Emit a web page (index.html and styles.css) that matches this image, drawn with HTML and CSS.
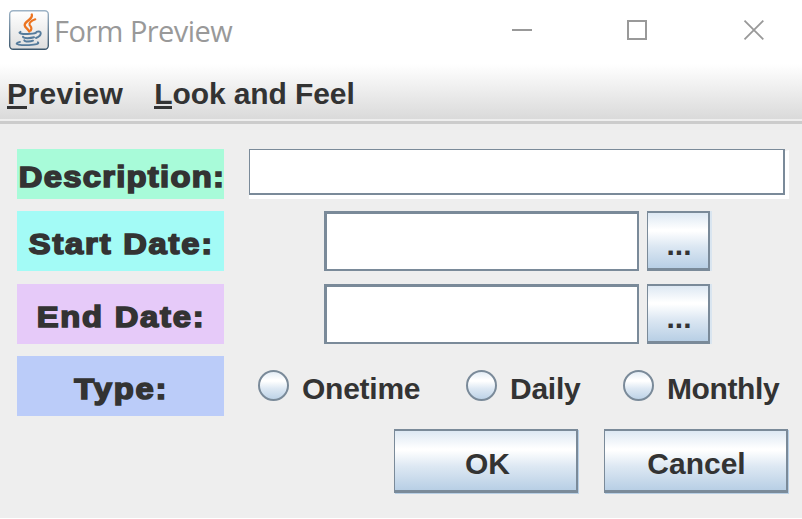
FILE: index.html
```html
<!DOCTYPE html>
<html lang="en">
<head>
<meta charset="utf-8">
<title>Form Preview</title>
<link rel="stylesheet" href="styles.css">
</head>
<body>
<div class="window">
  <header class="titlebar">
    <svg class="app-icon" viewBox="0 0 40 40" aria-hidden="true">
      <defs>
        <linearGradient id="tile" x1="0" y1="0" x2="0" y2="1"><stop offset="0" stop-color="#fff"/><stop offset="1" stop-color="#dedede"/></linearGradient>
        <linearGradient id="edge" x1="0" y1="0" x2="0" y2="1"><stop offset="0" stop-color="#9db3c6"/><stop offset="1" stop-color="#3d586e"/></linearGradient>
      </defs>
      <rect x=".7" y=".7" width="38.6" height="38.6" rx="3.5" fill="url(#tile)" stroke="url(#edge)" stroke-width="1.4"/>
      <g fill="none" stroke="#ec7420" stroke-linecap="round">
        <path d="M22.8 4.5C24.5 9.5 15.2 11 15.7 15.3C16 17.8 19.4 19 20.3 21.5" stroke-width="2.3"/>
        <path d="M26.300 9.300C22 11 19.900 12.800 20.600 14.800C21.200 16.600 23.700 17.200 21.800 20.600" stroke-width="2.100"/>
      </g>
      <g fill="none" stroke="#557b9b" stroke-linecap="round">
        <path d="M11.500 21.800C8 23.200 13.500 24.200 18.500 24C22 23.900 25 23.600 27 22.800" stroke-width="1.900"/>
        <path d="M27.500 21.800C33 20 33.500 25.500 27 28" stroke-width="1.900"/>
        <path d="M14 26.800C14.500 28.800 22 28.300 25 27.300" stroke-width="2"/>
        <path d="M15.300 30.300C16 32 21.500 31.800 24 30.700" stroke-width="2"/>
        <path d="M11 31.900C2 34.200 13 35.500 20 35.100C26.500 34.700 31 33.800 28.800 32.300" stroke-width="1.800"/>
      </g>
    </svg>
    <h1 class="title">Form Preview</h1>
    <svg class="controls" viewBox="0 0 252 20" shape-rendering="crispEdges" aria-hidden="true">
      <path d="M0 10H20" stroke="#999" stroke-width="2"/>
      <rect x="116" y="1" width="18" height="18" fill="none" stroke="#999" stroke-width="2"/>
      <path d="M232.500 .700L251.300 19.300M251.300 .700L232.500 19.300" stroke="#999" stroke-width="1.800" shape-rendering="auto"/>
    </svg>
  </header>
  <nav class="menubar">
    <span class="menu preview"><span class="key">P</span>review</span>
    <span class="menu look"><span class="key">L</span>ook and Feel</span>
  </nav>
  <main class="form">
    <div class="row first">
      <label class="label mint"><span>Description:</span></label>
      <div class="description"><div class="input"></div></div>
    </div>
    <div class="row start">
      <label class="label cyan"><span>Start Date:</span></label>
      <div class="date"></div><button class="button more">...</button>
    </div>
    <div class="row end">
      <label class="label lilac"><span>End Date:</span></label>
      <div class="date"></div><button class="button more">...</button>
    </div>
    <div class="row type">
      <label class="label blue"><span>Type:</span></label>
      <div class="radios">
        <span class="radio onetime"><i class="dot"></i><span>Onetime</span></span>
        <span class="radio daily"><i class="dot"></i><span>Daily</span></span>
        <span class="radio monthly"><i class="dot"></i><span>Monthly</span></span>
      </div>
    </div>
    <div class="actions">
      <button class="button action">OK</button>
      <button class="button action cancel">Cancel</button>
    </div>
  </main>
</div>
</body>
</html>
```
FILE: styles.css
```css
* { box-sizing: border-box; }
body {
  margin: 0;
  background: #fff;
  color: #333;
  font: bold 30px/34px "Liberation Sans", Arial, sans-serif;
}
.window { width: 802px; height: 519px; overflow: hidden; }
.titlebar { display: flex; align-items: flex-start; height: 64px; padding: 10px 38px 0 9px; }
.app-icon { width: 40px; height: 40px; flex: none; }
.title {
  margin: 1px 0 0 5px;
  color: #999;
  font: 400 29px/40px "Open Sans", "Noto Sans", sans-serif;
  letter-spacing: -0.55px;
  white-space: nowrap;
}
.controls { width: 252px; height: 20px; margin: 10px 0 0 auto; flex: none; }
.menubar {
  display: flex;
  height: 60px;
  padding: 13px 7px 0;
  border-bottom: 3px solid #ccc;
  background: linear-gradient(#fff, #dadada) 0 0 / 100% 55px no-repeat #eee;
  white-space: nowrap;
}
.key { box-shadow: 0 -3px 0 #333 inset; display: inline-block; height: 32px; }
.preview { letter-spacing: 0.4px; }
.look { margin-left: 31px; letter-spacing: -0.1px; }
.form { height: 394px; padding: 25px 14px 0 17px; background: #eee; }
.row { display: flex; height: 60px; }
.first { height: 50px; }
.start { margin-top: 12px; }
.end { margin-top: 13px; }
.type { margin-top: 12px; }
.label {
  display: flex;
  align-items: center;
  justify-content: center;
  width: 207px;
  flex: none;
  font-size: 29.5px;
  letter-spacing: 1.6px;
  -webkit-text-stroke: 1.6px #333;
  white-space: nowrap;
  padding: 5px 0 0 1px;
}
.label span { transform: scaleX(1.11); }
.mint { background: #a8fbd9; letter-spacing: 1.15px; padding-left: 2px; }
.cyan { background: #a3fbf6; }
.lilac { background: #e6caf9; }
.blue { background: #bbccf9; }
.description {
  flex: none;
  width: 540px;
  height: 50px;
  margin-left: 25px;
  background: #fff;
  clip-path: polygon(0 0, 536px 0, 536px 2px, 540px 1px, 540px 100%, 0 100%);
}
.input {
  width: 536px;
  height: 46px;
  border: solid #7a8a99;
  border-width: 1px 2px 2px 1px;
}
.date {
  width: 315px;
  margin-left: 100px;
  border: solid #7a8a99;
  border-width: 3px 2px 2px 3px;
  background: #fff;
}
.button {
  padding: 0;
  border: solid #7a8a99;
  border-width: 2px 2px 3px 1px;
  border-radius: 0;
  background: linear-gradient(#dde8f3, #fff 30%, #fff 33%, #dde8f3 60%, #b8cfe5);
  color: #333;
  font: inherit;
}
.more { width: 63px; margin-left: 8px; padding: 9px 0 0 2px; box-shadow: 2px 0 0 #d9e5f0; }
.action { width: 184px; height: 64px; padding: 6px 0 0 4px; box-shadow: 1px 1px 0 #b8cfe5; }
.cancel { padding-left: 2px; }
.radios { display: flex; margin-left: 34px; padding-top: 14px; white-space: nowrap; }
.radio { display: flex; width: 208px; letter-spacing: -0.25px; }
.radio > span { margin: 2px 0 0 13px; }
.daily { width: 157px; }
.monthly { width: auto; letter-spacing: -0.4px; }
.dot {
  width: 31px;
  height: 31px;
  border: 2.5px solid #7a8a99;
  border-radius: 50%;
  background: linear-gradient(#dde8f3, #fff 32%, #fff 36%, #dde8f3 60%, #b8cfe5) border-box;
}
.actions { display: flex; justify-content: flex-end; gap: 26px; margin-top: 13px; }
```
